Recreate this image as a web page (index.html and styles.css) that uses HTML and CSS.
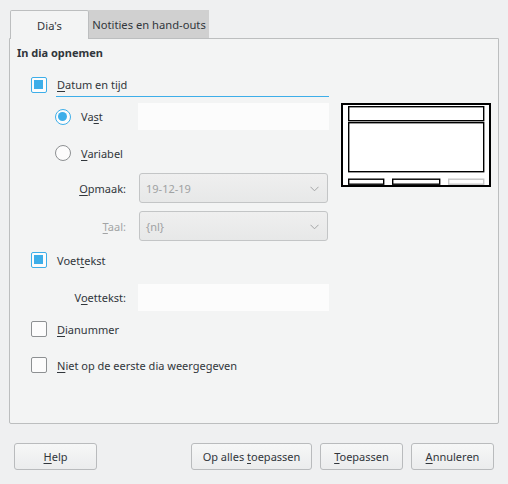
FILE: index.html
```html
<!DOCTYPE html>
<html lang="nl">
<head>
<meta charset="utf-8">
<title>Koptekst en voettekst</title>
<link rel="stylesheet" href="styles.css">
</head>
<body>
<div class="dialog">
  <div class="tabs">
    <div class="tab active">Dia's</div>
    <div class="tab">Notities en hand-outs</div>
  </div>
  <div class="panel">
    <div class="title">In dia opnemen</div>
    <div class="content">
      <div class="left">
        <div class="row r-datum">
          <span class="check on"></span>
          <span class="focus-label"><u>D</u>atum en tijd</span>
        </div>
        <div class="row r-vast">
          <span class="radio on"></span>
          <span class="rlabel">Va<u>s</u>t</span>
          <span class="field"></span>
        </div>
        <div class="row r-var">
          <span class="radio"></span>
          <span class="rlabel"><u>V</u>ariabel</span>
        </div>
        <div class="row r-combo1">
          <span class="flabel"><u>O</u>pmaak:</span>
          <span class="combo"><span class="ctext">19-12-19</span><svg class="chev" width="9" height="6" viewBox="0 0 9 6"><polyline points="0.5,0.8 4.5,4.8 8.5,0.8" fill="none" stroke="#a3a5a6" stroke-width="1"/></svg></span>
        </div>
        <div class="row r-combo2">
          <span class="flabel dis"><u>T</u>aal:</span>
          <span class="combo"><span class="ctext">{nl}</span><svg class="chev" width="9" height="6" viewBox="0 0 9 6"><polyline points="0.5,0.8 4.5,4.8 8.5,0.8" fill="none" stroke="#a3a5a6" stroke-width="1"/></svg></span>
        </div>
        <div class="row r-voet">
          <span class="check on"></span>
          <span class="clabel">Voet<u>t</u>ekst</span>
        </div>
        <div class="row r-voetf">
          <span class="flabel">V<u>o</u>ettekst:</span>
          <span class="field"></span>
        </div>
        <div class="row r-dia">
          <span class="check"></span>
          <span class="clabel"><u>D</u>ianummer</span>
        </div>
        <div class="row r-niet">
          <span class="check"></span>
          <span class="clabel"><u>N</u>iet op de eerste dia weergegeven</span>
        </div>
      </div>
      <div class="right">
        <svg class="preview" width="150" height="84" viewBox="0 0 150 84">
          <rect x="1" y="1" width="148" height="82" fill="#ffffff" stroke="#000" stroke-width="2"/>
          <rect x="7.7" y="3.7" width="135" height="14" fill="#ffffff" stroke="#000" stroke-width="1.4"/>
          <rect x="7.7" y="19.7" width="135" height="49" fill="#ffffff" stroke="#000" stroke-width="1.4"/>
          <rect x="7.7" y="76.2" width="35" height="5" fill="#ffffff" stroke="#000" stroke-width="1.4"/>
          <rect x="51.7" y="76.2" width="47" height="5" fill="#ffffff" stroke="#000" stroke-width="1.4"/>
          <rect x="107.7" y="76.2" width="35" height="5" fill="#ffffff" stroke="#c6c6c6" stroke-width="1.4"/>
        </svg>
      </div>
    </div>
  </div>
  <div class="buttons">
    <button class="btn"><u>H</u>elp</button>
    <div class="btn-group">
      <button class="btn wide">Op alles <u>t</u>oepassen</button>
      <button class="btn"><u>T</u>oepassen</button>
      <button class="btn"><u>A</u>nnuleren</button>
    </div>
  </div>
</div>
</body>
</html>
```

FILE: styles.css
```css
html, body {
  margin: 0;
  padding: 0;
  background: #eff0f1;
}
body {
  font-family: "Noto Sans", "DejaVu Sans", sans-serif;
  font-size: 11px;
  color: #31363b;
  width: 508px;
  height: 484px;
  overflow: hidden;
}
u {
  text-decoration: underline;
  text-underline-offset: 2px;
}
.dialog {
  padding: 10px 9px 0 9px;
}
.tabs {
  display: flex;
  height: 28px;
  padding-left: 1px;
  position: relative;
  z-index: 2;
}
.tab {
  box-sizing: border-box;
  height: 28px;
  width: 120px;
  background: #d0d0d0;
  display: flex;
  align-items: center;
  justify-content: center;
  padding-top: 1px;
  font-size: 11.2px;
}
.tab.active {
  width: 79px;
  height: 29px;
  background: #f3f4f4;
  border: 1px solid #bcbebf;
  border-bottom: none;
  border-radius: 2px 2px 0 0;
  padding-top: 0;
}
.panel {
  box-sizing: border-box;
  width: 490px;
  height: 386px;
  background: #f3f4f4;
  border: 1px solid #bcbebf;
  border-radius: 0 0 2px 2px;
  position: relative;
  z-index: 1;
}
.title {
  font-weight: bold;
  height: 16px;
  line-height: 16px;
  margin: 6px 0 0 7px;
}
.content {
  display: flex;
}
.left {
  width: 319px;
}
.right {
  margin-left: 12px;
  padding-top: 42px;
}
.preview {
  display: block;
}
.row {
  display: flex;
  align-items: center;
}
.r-datum { height: 24px; margin-top: 12px; }
.r-vast { height: 27px; margin-top: 6px; }
.r-var { height: 24px; margin-top: 11px; }
.r-combo1 { height: 30px; margin-top: 8px; }
.r-combo2 { height: 30px; margin-top: 8px; }
.r-voet { height: 24px; margin-top: 7px; }
.r-voetf { height: 27px; margin-top: 12px; }
.r-dia { height: 24px; margin-top: 6px; }
.r-niet { height: 24px; margin-top: 12px; }

.check {
  box-sizing: border-box;
  width: 16px;
  height: 16px;
  margin-left: 21px;
  border: 1px solid #8d9092;
  border-radius: 2px;
  background: #fcfcfc;
  flex: none;
  position: relative;
}
.check.on {
  border: 1.5px solid #3daee9;
  background: #fcfcfc;
}
.check.on::after {
  content: "";
  position: absolute;
  left: 2px;
  top: 2px;
  width: 9px;
  height: 9px;
  background: #3daee9;
}
.radio {
  box-sizing: border-box;
  width: 16px;
  height: 16px;
  margin-left: 45px;
  border: 1px solid #8d9092;
  border-radius: 50%;
  background: #fcfcfc;
  flex: none;
  position: relative;
}
.radio.on {
  border: 1.5px solid #3daee9;
}
.radio.on::after {
  content: "";
  position: absolute;
  left: 2px;
  top: 2px;
  width: 9px;
  height: 9px;
  border-radius: 50%;
  background: #3daee9;
}
.focus-label {
  box-sizing: border-box;
  margin-left: 9px;
  padding-left: 1px;
  width: 273px;
  height: 24px;
  display: flex;
  align-items: center;
  border-bottom: 1px solid #3daee9;
}
.clabel {
  margin-left: 10px;
}
.rlabel {
  margin-left: 10px;
}
.field {
  width: 191px;
  height: 27px;
  background: #fcfcfc;
  margin-left: auto;
}
.flabel {
  width: 116px;
  text-align: right;
  flex: none;
}
.flabel.dis {
  color: #a2a4a5;
}
.r-voetf .flabel {
  width: 116px;
}
.combo {
  box-sizing: border-box;
  width: 189px;
  height: 30px;
  margin-left: 13px;
  border: 1px solid #c3c5c6;
  border-radius: 3px;
  background: linear-gradient(#efefef, #e7e8e8);
  display: flex;
  align-items: center;
  padding: 0 8px 0 6px;
  color: #a0a2a3;
}
.ctext {
  flex: 1;
}
.chev {
  display: block;
  margin-top: 1px;
}
.buttons {
  display: flex;
  justify-content: space-between;
  margin: 19px 5px 0 5px;
}
.btn-group {
  display: flex;
  gap: 8px;
}
.btn {
  box-sizing: border-box;
  width: 83px;
  height: 27px;
  font-family: "Noto Sans", "DejaVu Sans", sans-serif;
  font-size: 11px;
  color: #31363b;
  border: 1px solid #b9bbbd;
  border-radius: 3px;
  background: linear-gradient(#f6f7f7, #ebeced);
  padding: 0;
  margin: 0;
}
.btn.wide {
  width: 121px;
}
```
